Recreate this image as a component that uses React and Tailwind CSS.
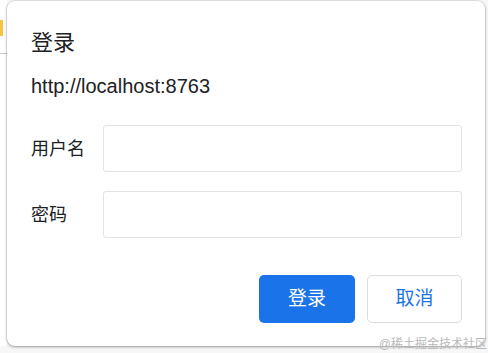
import React from 'react'

const FONT = { fontFamily: '"Liberation Sans", "Noto Sans CJK SC", sans-serif' }

// ─── Field row ──────────────────────────────────────────────────────────────
function FieldRow({ label, type = 'text' }) {
  return (
    <div className="flex items-center">
      <label className="w-[72px] shrink-0 text-[18px] leading-[24px] text-[#202124]">{label}</label>
      <input
        type={type}
        className="w-[359px] h-[47px] rounded-[3px] border border-[#e3e3e3] bg-white outline-none px-2"
      />
    </div>
  )
}

export default function App() {
  return (
    <div className="relative w-[488px] h-[353px] bg-[#f7f7f7] overflow-hidden" style={FONT}>
      {/* page behind the dialog */}
      <div className="absolute left-0 top-0 w-[7px] h-[53px] bg-white" />
      <div className="absolute left-0 top-[20px] w-[3px] h-[16px] bg-[#f5c542]" />
      <div className="absolute left-0 top-[53px] w-[7px] h-px bg-[#c8c8c8]" />
      <div className="absolute left-0 top-[54px] w-[7px] h-[292px] bg-white" />

      {/* dialog */}
      <div className="relative ml-[7px] mt-[1px] w-[478px] h-[345px] rounded-[8px] bg-white shadow-[0_1px_3px_rgba(0,0,0,0.35),0_0_0_1px_rgba(0,0,0,0.06)] pl-[24px] pr-[23px] pt-[28px]">
        <h1 className="text-[22px] leading-[28px] text-[#202124] font-normal">登录</h1>
        <div className="mt-[17px] text-[20px] leading-[24px] text-[#202124]">http://localhost:8763</div>

        <div className="mt-[27px] flex flex-col gap-[19px]">
          <FieldRow label="用户名" />
          <FieldRow label="密码" type="password" />
        </div>

        <div className="mt-[37px] flex justify-end gap-[12px]">
          <button className="w-[96px] h-[48px] rounded-[5px] bg-[#1a73e8] text-white text-[19px]">登录</button>
          <button className="w-[95px] h-[48px] rounded-[5px] border border-[#dadce0] bg-white text-[#1a73e8] text-[19px]">取消</button>
        </div>
      </div>

      {/* watermark */}
      <div className="absolute right-[1px] bottom-[2px] text-[12px] leading-[14px] text-[#b9b9b9]">@稀土掘金技术社区</div>
    </div>
  )
}
